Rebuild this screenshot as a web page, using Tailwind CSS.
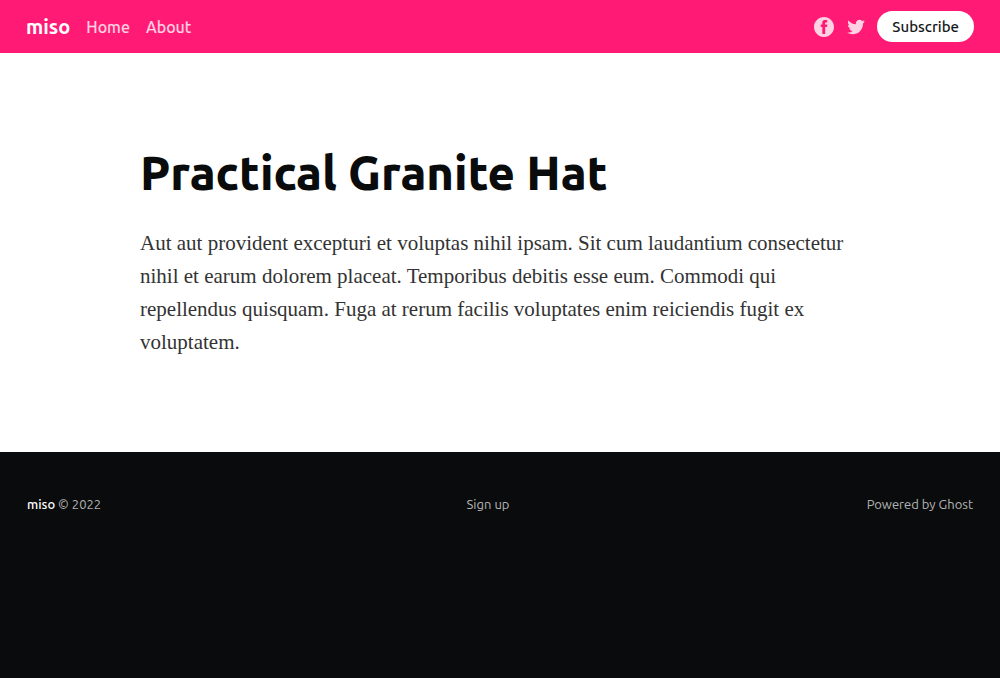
<!DOCTYPE html>
<html lang="en">
<head>
<meta charset="utf-8">
<meta name="viewport" content="width=device-width, initial-scale=1">
<title>Practical Granite Hat</title>
<script src="https://cdn.jsdelivr.net/npm/@tailwindcss/browser@4"></script>
</head>
<body class="flex min-h-screen flex-col bg-white font-['Ubuntu','Noto_Sans',sans-serif] text-[#15171a]">
<header class="flex h-[53px] items-center justify-between bg-[#ff1a75] px-[26px] text-white">
  <div class="flex items-center gap-4">
    <a href="#" class="text-[20px] leading-6 font-bold">miso</a>
    <nav class="flex items-center gap-4 text-[16px] leading-6 font-medium text-white/80">
      <a href="#">Home</a>
      <a href="#">About</a>
    </nav>
  </div>
  <div class="flex items-center gap-3">
    <a href="#" aria-label="Facebook" class="text-white/80">
      <svg class="size-5" viewBox="0 0 32 32" fill="currentColor"><path d="M16 0c8.837 0 16 7.163 16 16s-7.163 16-16 16S0 24.837 0 16 7.163 0 16 0zm5.204 4.911h-3.546c-2.103 0-4.443.885-4.443 3.934.01 1.062 0 2.080 0 3.225h-2.433v3.872h2.509v11.147h4.610v-11.220h3.042l.275-3.810h-3.397s.007-1.695 0-2.187c0-1.205 1.253-1.136 1.329-1.136.596 0 1.756.002 2.054 0V4.911z"/></svg>
    </a>
    <a href="#" aria-label="Twitter" class="text-white/80">
      <svg class="size-5" viewBox="0 0 32 32" fill="currentColor"><path d="M30.063 7.313c-.813 1.125-1.750 2.125-2.875 2.938v.750c0 1.563-.188 3.125-.688 4.625a15.088 15.088 0 0 1-2.063 4.438c-.875 1.438-2 2.688-3.250 3.813a15.015 15.015 0 0 1-4.625 2.563c-1.813.688-3.750 1-5.750 1-3.250 0-6.188-.875-8.875-2.625.438.063.875.125 1.375.125 2.688 0 5.063-.875 7.188-2.500-1.250 0-2.375-.375-3.375-1.125s-1.688-1.688-2.063-2.875c.438.063.813.125 1.125.125.5 0 1-.063 1.500-.25-1.313-.25-2.438-.938-3.313-1.938a5.673 5.673 0 0 1-1.313-3.688v-.063c.813.438 1.688.688 2.625.688a5.228 5.228 0 0 1-1.875-2c-.5-.875-.688-1.813-.688-2.750 0-1.063.250-2.063.750-2.938 1.438 1.750 3.188 3.188 5.250 4.250s4.313 1.688 6.688 1.813a5.579 5.579 0 0 1 1.500-5.438c1.125-1.125 2.500-1.688 4.125-1.688s3.063.625 4.188 1.813a11.480 11.480 0 0 0 3.688-1.375c-.438 1.375-1.313 2.438-2.563 3.188 1.125-.125 2.188-.438 3.313-.875z"/></svg>
    </a>
    <a href="#" class="-ml-px rounded-full bg-white px-[15px] py-1 text-[15px] leading-[23px] font-medium text-[#15171a]">Subscribe</a>
  </div>
</header>
<main class="px-6 pt-[91px] pb-[93px]">
  <article class="mx-auto max-w-[720px]">
    <h1 class="text-[47px] leading-[58px] font-extrabold text-[#0a0b0c]">Practical Granite Hat</h1>
    <p class="mt-[25px] font-['Liberation_Serif',serif] text-[21px] leading-[33px] text-[#333]">Aut aut provident excepturi et voluptas nihil ipsam. Sit cum laudantium consectetur nihil et earum dolorem placeat. Temporibus debitis esse eum. Commodi qui repellendus quisquam. Fuga at rerum facilis voluptates enim reiciendis fugit ex voluptatem.</p>
  </article>
</main>
<footer class="grow bg-[#0a0b0c] px-[27px] pt-[41px] text-[13px] leading-[22px] text-white/70">
  <div class="grid grid-cols-[1fr_auto_1fr] items-center">
    <section><a href="#" class="font-medium text-white">miso</a> © 2022</section>
    <nav class="pr-6"><a href="#">Sign up</a></nav>
    <div class="text-right"><a href="#">Powered by Ghost</a></div>
  </div>
</footer>
</body>
</html>
